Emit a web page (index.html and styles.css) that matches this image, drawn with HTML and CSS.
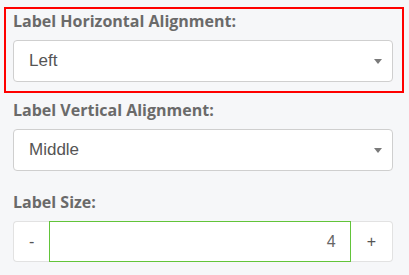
FILE: index.html
```html
<!DOCTYPE html>
<html lang="en">
<head>
    <meta charset="UTF-8">
    <meta name="viewport" content="width=device-width, initial-scale=1.0">
    <title>Label Settings</title>
    <link rel="stylesheet" href="styles.css">
</head>
<body>
    <div class="panel">
        <div class="form-group highlighted">
            <label class="field-label">Label Horizontal Alignment:</label>
            <div class="select-box">
                <span class="select-value">Left</span>
                <span class="select-arrow"></span>
            </div>
        </div>
        <div class="form-group">
            <label class="field-label">Label Vertical Alignment:</label>
            <div class="select-box">
                <span class="select-value">Middle</span>
                <span class="select-arrow"></span>
            </div>
        </div>
        <div class="form-group last">
            <label class="field-label">Label Size:</label>
            <div class="number-group">
                <button class="step-btn minus">-</button>
                <input class="number-input" type="text" value="4">
                <button class="step-btn plus">+</button>
            </div>
        </div>
    </div>
</body>
</html>
```

FILE: styles.css
```css
body {
    margin: 0;
    background-color: #f6f7f9;
    font-family: "Open Sans", sans-serif;
}
.panel {
    padding: 7px 5px 0 4px;
}
.form-group {
    border: 2px solid transparent;
    padding: 1px 9px 9px 7px;
}
.form-group.highlighted {
    border-color: #f00;
}
.field-label {
    display: block;
    font-size: 16px;
    line-height: 22px;
    font-weight: bold;
    color: #6a6a6a;
    margin-bottom: 8px;
}
.form-group + .form-group {
    padding-top: 4px;
}
.form-group.last {
    padding-top: 7px;
}
.select-box {
    display: flex;
    align-items: center;
    justify-content: space-between;
    height: 40px;
    background-color: #fff;
    border: 1px solid #cfcfcf;
    border-radius: 4px;
    padding: 0 10px 0 15px;
}
.select-value {
    font-family: "Liberation Sans", Arial, sans-serif;
    font-size: 17px;
    color: #555;
}
.select-arrow {
    width: 0;
    height: 0;
    border-left: 4px solid transparent;
    border-right: 4px solid transparent;
    border-top: 5px solid #7a7a7a;
}
.number-group {
    display: flex;
    height: 41px;
}
.step-btn {
    font-family: "Liberation Sans", Arial, sans-serif;
    font-size: 16px;
    color: #555;
    background-color: #fff;
    border: 1px solid #e2e2e2;
    padding: 0 15px;
    cursor: pointer;
}
.step-btn.minus {
    border-right: none;
    border-radius: 4px 0 0 4px;
}
.step-btn.plus {
    border-left: none;
    border-radius: 0 4px 4px 0;
    padding: 0 16px;
}
.number-input {
    flex: 1;
    min-width: 0;
    border: 1px solid #62c43a;
    outline: none;
    text-align: right;
    padding: 0 14px;
    font-family: "Liberation Sans", Arial, sans-serif;
    font-size: 16px;
    color: #666;
    background-color: #fff;
}
```
